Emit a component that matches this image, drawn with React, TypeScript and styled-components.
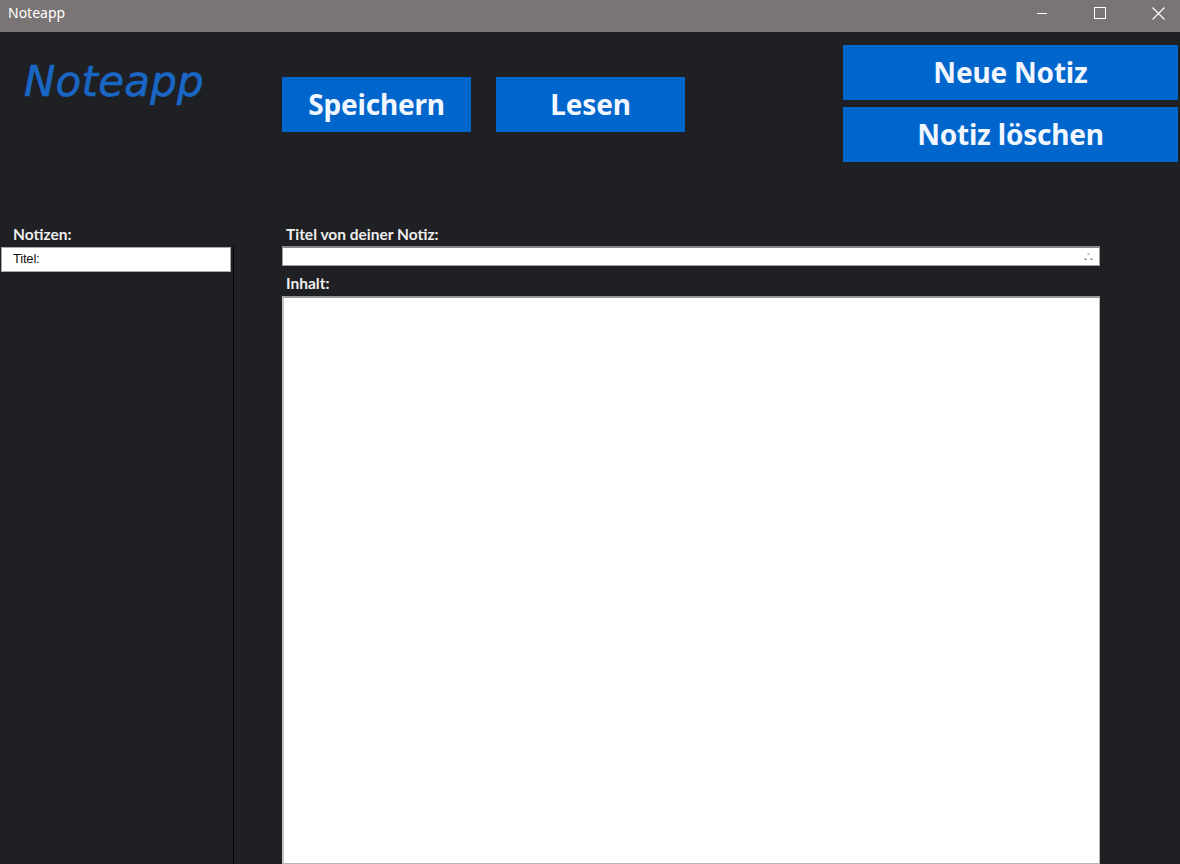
import React from 'react'
import styled, {createGlobalStyle} from 'styled-components'

const GlobalStyle = createGlobalStyle`
  html, body {
    margin: 0;
    padding: 0;
    background: #1f2023;
  }
  * {
    box-sizing: border-box;
  }
`

const Window = styled.div`
  width: 1180px;
  height: 864px;
  display: flex;
  flex-direction: column;
  background: #1f2023;
  overflow: hidden;
  font-family: "Noto Sans", "Open Sans", sans-serif;
`

const TitleBar = styled.div`
  height: 32px;
  flex: none;
  display: flex;
  align-items: center;
  background: #7a7574;
  color: #ffffff;
`

const WindowTitle = styled.span`
  flex: 1;
  padding-left: 8px;
  font-size: 14px;
  line-height: 32px;
  margin-top: -6px;
`

const ControlButton = styled.div`
  width: 58px;
  height: 32px;
  display: flex;
  align-items: center;
  justify-content: center;
  margin-top: -6px;
  &:last-child {
    margin-right: -7px;
  }
`

const Header = styled.div`
  height: 190px;
  flex: none;
  display: flex;
  align-items: flex-start;
`

const Logo = styled.div`
  width: 282px;
  flex: none;
  padding: 25px 0 0 24px;
  font-family: "DejaVu Sans", sans-serif;
  font-style: italic;
  font-size: 42px;
  letter-spacing: 0.2px;
  color: #1a66c4;
  -webkit-text-stroke: 0.6px #1a66c4;
`

const MainActions = styled.div`
  display: flex;
  gap: 25px;
  margin-top: 45px;
`

const SideActions = styled.div`
  margin-left: auto;
  margin-right: 2px;
  margin-top: 13px;
  display: flex;
  flex-direction: column;
  gap: 7px;
`

const ActionButton = styled.button<{$wide?: boolean}>`
  width: ${p => (p.$wide ? '335px' : '189px')};
  height: 55px;
  border: none;
  padding: 0 0 1px;
  background: #0066cc;
  color: #f2f6ff;
  font-family: "Noto Sans", "Open Sans", sans-serif;
  font-weight: 700;
  font-size: 28px;
  letter-spacing: -0.2px;
  cursor: pointer;
`

const Main = styled.div`
  flex: 1;
  display: flex;
  min-height: 0;
`

const Sidebar = styled.div`
  width: 234px;
  flex: none;
  display: flex;
  flex-direction: column;
`

const FieldLabel = styled.div<{$indent: number}>`
  height: 24px;
  padding: 3px 0 0 ${p => p.$indent}px;
  font-family: "Lato", "Noto Sans", sans-serif;
  font-weight: 700;
  font-size: 15.5px;
  line-height: 18px;
  color: #eeeeee;
`

const NoteList = styled.div`
  flex: 1;
  border-right: 1px solid #050505;
  padding-top: 1px;
`

const NoteItem = styled.div`
  height: 25px;
  margin: 0 2px 0 1px;
  background: #ffffff;
  border: 1px solid #a9a9a9;
  padding: 3px 0 0 11px;
  font-family: "Liberation Sans", Arial, sans-serif;
  font-size: 13px;
  letter-spacing: -0.2px;
  color: #111111;
`

const Editor = styled.div`
  margin-left: 48px;
  width: 818px;
  display: flex;
  flex-direction: column;
`

const TitleInput = styled.div`
  height: 20px;
  flex: none;
  display: flex;
  align-items: center;
  justify-content: flex-end;
  background: #ffffff;
  border: 1px solid #a0a0a0;
  border-top: 2px solid #8a8a8a;
  padding-right: 6px;
`

const ContentLabel = styled(FieldLabel)`
  height: 30px;
  padding-top: 8px;
`

const ContentArea = styled.div`
  flex: 1;
  background: #ffffff;
  border: 1px solid #b5b5b5;
  border-left: 2px solid #c6c6c6;
  border-top: 2px solid #9a9a9a;
`

export default function App() {
  return (
    <Window>
      <GlobalStyle />
      <TitleBar>
        <WindowTitle>Noteapp</WindowTitle>
        <ControlButton>
          <svg width="12" height="12" viewBox="0 0 12 12">
            <path d="M1 6.5h10" stroke="#fff" strokeWidth="1" />
          </svg>
        </ControlButton>
        <ControlButton>
          <svg width="12" height="12" viewBox="0 0 12 12">
            <rect x="0.5" y="0.5" width="11" height="11" fill="none" stroke="#fff" strokeWidth="1" />
          </svg>
        </ControlButton>
        <ControlButton>
          <svg width="13" height="13" viewBox="0 0 13 13">
            <path d="M0.5 0.5l12 12M12.5 0.5l-12 12" stroke="#fff" strokeWidth="1.1" />
          </svg>
        </ControlButton>
      </TitleBar>
      <Header>
        <Logo>Noteapp</Logo>
        <MainActions>
          <ActionButton>Speichern</ActionButton>
          <ActionButton>Lesen</ActionButton>
        </MainActions>
        <SideActions>
          <ActionButton $wide>Neue Notiz</ActionButton>
          <ActionButton $wide>Notiz löschen</ActionButton>
        </SideActions>
      </Header>
      <Main>
        <Sidebar>
          <FieldLabel $indent={13}>Notizen:</FieldLabel>
          <NoteList>
            <NoteItem>Titel:</NoteItem>
          </NoteList>
        </Sidebar>
        <Editor>
          <FieldLabel $indent={4}>Titel von deiner Notiz:</FieldLabel>
          <TitleInput>
            <svg width="9" height="9" viewBox="0 0 9 9">
              <path d="M3.5 1.5h2v1h-2z M0.5 6.5h2v1.5h-2z M6.5 6.5h2v1.5h-2z" fill="#7a7a7a" />
            </svg>
          </TitleInput>
          <ContentLabel $indent={4}>Inhalt:</ContentLabel>
          <ContentArea />
        </Editor>
      </Main>
    </Window>
  )
}
